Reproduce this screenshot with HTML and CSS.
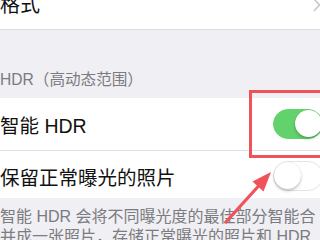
FILE: index.html
```html
<!DOCTYPE html>
<html lang="zh-CN">
<head>
    <meta charset="UTF-8">
    <meta name="viewport" content="width=device-width, initial-scale=1.0">
    <title>HDR 设置</title>
    <link rel="stylesheet" href="styles.css">
</head>
<body>
    <div class="screen">
        <div class="top-row">
            <span class="top-label">格式</span>
            <svg class="chevron" width="8" height="14" viewBox="0 0 8 14">
                <polyline points="1,-1 6.5,5 1,11" />
            </svg>
        </div>

        <div class="group-header">HDR（高动态范围）</div>

        <div class="group">
            <div class="cell">
                <span class="cell-label">智能 HDR</span>
                <span class="switch on"><span class="knob"></span></span>
            </div>
            <div class="cell cell-next">
                <span class="cell-label">保留正常曝光的照片</span>
                <span class="switch"><span class="knob"></span></span>
            </div>
        </div>

        <div class="group-footer">
            智能 HDR 会将不同曝光度的最佳部分智能合<br>
            并成一张照片，存储正常曝光的照片和 HDR
        </div>

        <!-- annotation overlay -->
        <div class="highlight"></div>
        <svg class="arrow" width="320" height="240" viewBox="0 0 320 240">
            <line x1="225" y1="223" x2="259" y2="185.5" />
            <polygon points="271,172 252.5,181.5 263.5,191.5" />
        </svg>
    </div>
</body>
</html>
```

FILE: styles.css
```css
* {
    margin: 0;
    padding: 0;
    box-sizing: border-box;
}

body {
    background: #efeff4;
    font-family: 'Liberation Sans', 'Noto Sans CJK SC', sans-serif;
}

.screen {
    position: relative;
    width: 320px;
    height: 240px;
    overflow: hidden;
    display: flex;
    flex-direction: column;
    background: #efeff4;
}

.top-row {
    height: 30px;
    flex-shrink: 0;
    background: #fff;
    border-bottom: 1px solid #dcdce1;
    display: flex;
    justify-content: space-between;
    align-items: flex-start;
}

.top-label {
    font-size: 20px;
    line-height: 20px;
    margin-top: -5px;
    color: #111;
}

.chevron {
    margin-right: -1px;
    fill: none;
    stroke: #c8c8cd;
    stroke-width: 1.6;
}

.group-header {
    height: 68px;
    flex-shrink: 0;
    display: flex;
    align-items: flex-end;
    padding-bottom: 8px;
    font-size: 15.6px;
    line-height: 20px;
    color: #7b7b80;
}

.group {
    background: #fff;
    flex-shrink: 0;
}

.cell {
    height: 52px;
    display: flex;
    align-items: center;
    justify-content: space-between;
}

.cell-next {
    height: 48px;
    border-top: 1px solid #e3e3e6;
    padding-top: 3px;
}

.cell-label {
    font-size: 19.5px;
    color: #111;
    white-space: nowrap;
}

.switch {
    position: relative;
    width: 50px;
    height: 30px;
    margin-right: -3px;
    border-radius: 15px;
    background: #fff;
    border: 1.5px solid #e4e4e8;
}

.switch .knob {
    position: absolute;
    top: 0;
    left: 0;
    width: 27px;
    height: 27px;
    border-radius: 50%;
    background: #fff;
    box-shadow: 0 2px 3px rgba(0, 0, 0, 0.22), 0 0 1px rgba(0, 0, 0, 0.15);
}

.switch.on {
    background: #62d26c;
    border-color: #62d26c;
}

.switch.on .knob {
    left: auto;
    right: 0;
}

.group-footer {
    padding-top: 9px;
    font-size: 16px;
    line-height: 20px;
    color: #7b7b80;
    white-space: nowrap;
}

/* annotation overlay */
.highlight {
    position: absolute;
    left: 249px;
    top: 90px;
    width: 80px;
    height: 68px;
    border: 3px solid #f0525a;
}

.arrow {
    position: absolute;
    left: 0;
    top: 0;
}

.arrow line {
    stroke: #f0525a;
    stroke-width: 3.2;
}

.arrow polygon {
    fill: #f0525a;
}
```
